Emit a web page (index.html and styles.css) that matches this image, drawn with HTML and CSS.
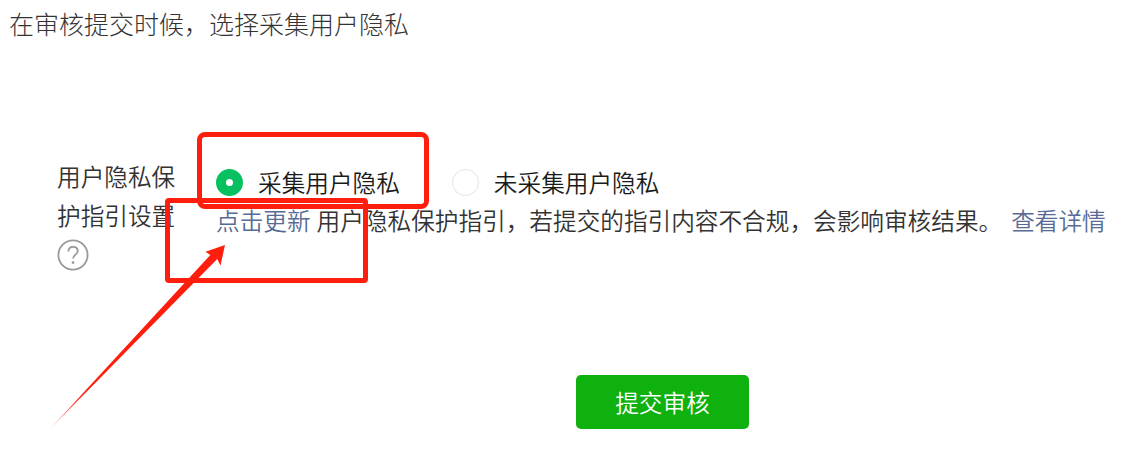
FILE: index.html
```html
<!DOCTYPE html>
<html lang="zh-CN">
<head>
<meta charset="UTF-8" />
<meta name="viewport" content="width=device-width, initial-scale=1" />
<title>提交审核</title>
<link rel="stylesheet" href="styles.css">
</head>
<body>
  <p class="intro">在审核提交时候，选择采集用户隐私</p>

  <form class="form">
    <div class="label">
      <span>用户隐私保护指引设置</span>
      <svg class="help" viewBox="0 0 32 32">
        <circle cx="16" cy="16" r="14.6" />
        <path d="M11.4 12.4c0-2.900 1.900-4.600 4.700-4.600s4.600 1.700 4.600 4.200c0 3.600-4.600 3.800-4.600 7.600" />
        <circle class="dot" cx="16" cy="23.600" r="1.400" />
      </svg>
    </div>
    <div class="field">
      <div class="options">
        <label class="option"><i class="radio checked"></i>采集用户隐私</label>
        <label class="option"><i class="radio"></i>未采集用户隐私</label>
      </div>
      <p class="tips"><a class="link">点击更新</a><span>用户隐私保护指引，若提交的指引内容不合规，会影响审核结果。</span><a class="link">查看详情</a></p>
    </div>
  </form>

  <button class="btn" type="button">提交审核</button>

  <!-- annotations -->
  <div class="mark mark-option"></div>
  <div class="mark mark-link"></div>
  <svg class="arrow" viewBox="0 0 180 190">
    <defs>
      <linearGradient id="fade" gradientUnits="userSpaceOnUse" x1="4" y1="188" x2="40" y2="150">
        <stop offset="0" stop-color="#ff1d0d" stop-opacity="0.3" />
        <stop offset="1" stop-color="#ff1d0d" />
      </linearGradient>
    </defs>
    <path fill="url(#fade)" d="M180 3L160.500 9.700L165.300 13L4 188L172.200 17L175.500 23.500Z" />
  </svg>
</body>
</html>
```
FILE: styles.css
```css
:root {
  --color-text: #333;
  --color-link: #576b95;
  --color-radio: #07c160;
  --color-btn: #0eb10e;
  --color-mark: #ff1d0d;
}
body {
  margin: 0;
  height: 472px;
  position: relative;
  overflow: hidden;
  background: #fff;
  color: var(--color-text);
  font-family: "Noto Sans CJK SC", sans-serif;
  font-size: 23.65px;
  font-weight: 350;
}
p {
  margin: 0;
}
.intro {
  padding: 5px 0 0 9px;
  font-size: 25px;
  line-height: 36px;
  font-weight: 300;
}
.form {
  display: flex;
  gap: 40px;
  margin: 116px 0 0 57px;
}
.label {
  flex: none;
  width: 119px;
  line-height: 38.5px;
}
.label span,
.help {
  display: block;
}
.help {
  width: 32px;
  height: 32px;
  margin-top: 5px;
  fill: none;
  stroke: #999;
  stroke-width: 1.8;
}
.help .dot {
  fill: #999;
  stroke: none;
}
.field {
  padding-top: 6px;
  white-space: nowrap;
}
.options {
  display: flex;
  gap: 52px;
  line-height: 38px;
  color: #1a1a1a;
}
.option {
  display: flex;
  align-items: center;
  gap: 15px;
}
.radio {
  box-sizing: border-box;
  width: 27px;
  height: 27px;
  border: 1.5px solid #e3e3e3;
  border-radius: 50%;
}
.radio.checked {
  border: 10px solid var(--color-radio);
}
.tips {
  display: flex;
  line-height: 38px;
}
.tips span {
  margin: 0 9px 0 6px;
}
.link {
  color: var(--color-link);
}
.btn {
  display: block;
  width: 173px;
  height: 54px;
  margin: 104px 0 0 576px;
  padding: 0 0 1px;
  border: none;
  border-radius: 5px;
  background: var(--color-btn);
  color: #fff;
  font: inherit;
}
.mark {
  position: absolute;
  box-sizing: border-box;
  border: 5px solid var(--color-mark);
}
.mark-option {
  left: 197px;
  top: 132px;
  width: 232px;
  height: 77px;
  border-radius: 8px;
}
.mark-link {
  left: 165px;
  top: 198px;
  width: 203px;
  height: 85px;
  border-radius: 4px;
}
.arrow {
  position: absolute;
  left: 45px;
  top: 242px;
  width: 180px;
  height: 190px;
}
```
